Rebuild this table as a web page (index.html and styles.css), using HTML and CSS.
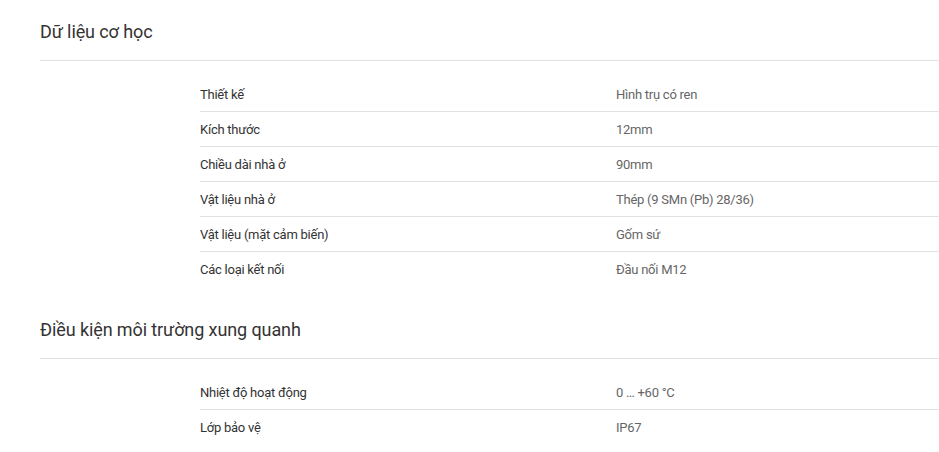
FILE: index.html
```html
<!DOCTYPE html>
<html lang="vi">
<head>
<meta charset="utf-8">
<title>Thông số kỹ thuật</title>
<link rel="stylesheet" href="styles.css">
</head>
<body>
<div class="specs">
  <section class="group">
    <h2 class="group-title">Dữ liệu cơ học</h2>
    <div class="rows">
      <div class="row"><span class="label">Thiết kế</span><span class="value">Hình trụ có ren</span></div>
      <div class="row"><span class="label">Kích thước</span><span class="value">12mm</span></div>
      <div class="row"><span class="label">Chiều dài nhà ở</span><span class="value">90mm</span></div>
      <div class="row"><span class="label">Vật liệu nhà ở</span><span class="value">Thép (9 SMn (Pb) 28/36)</span></div>
      <div class="row"><span class="label">Vật liệu (mặt cảm biến)</span><span class="value">Gốm sứ</span></div>
      <div class="row"><span class="label">Các loại kết nối</span><span class="value">Đầu nối M12</span></div>
    </div>
  </section>
  <section class="group">
    <h2 class="group-title">Điều kiện môi trường xung quanh</h2>
    <div class="rows">
      <div class="row"><span class="label">Nhiệt độ hoạt động</span><span class="value">0 … +60 °C</span></div>
      <div class="row"><span class="label">Lớp bảo vệ</span><span class="value">IP67</span></div>
    </div>
  </section>
</div>
</body>
</html>
```
FILE: styles.css
```css
html, body {
  margin: 0;
  padding: 0;
  background: #fff;
}
body {
  font-family: Roboto, "Liberation Sans", sans-serif;
  color: #333;
}
.specs {
  padding-left: 40px;
}
.group-title {
  margin: 0;
  font-size: 18px;
  font-weight: 400;
  line-height: 24px;
  letter-spacing: -0.1px;
  color: #333;
  padding-top: 20px;
  padding-bottom: 16px;
  border-bottom: 1px solid #e1e1e1;
}
.rows {
  margin-left: 160px;
  padding-top: 16px;
  padding-bottom: 12px;
}
.row {
  display: grid;
  grid-template-columns: 416px 1fr;
  height: 34px;
  align-items: center;
  font-size: 13px;
  letter-spacing: -0.25px;
  border-bottom: 1px solid #e1e1e1;
}
.row:last-child {
  border-bottom: none;
}
.label {
  color: #333;
}
.value {
  color: #666;
}
```
